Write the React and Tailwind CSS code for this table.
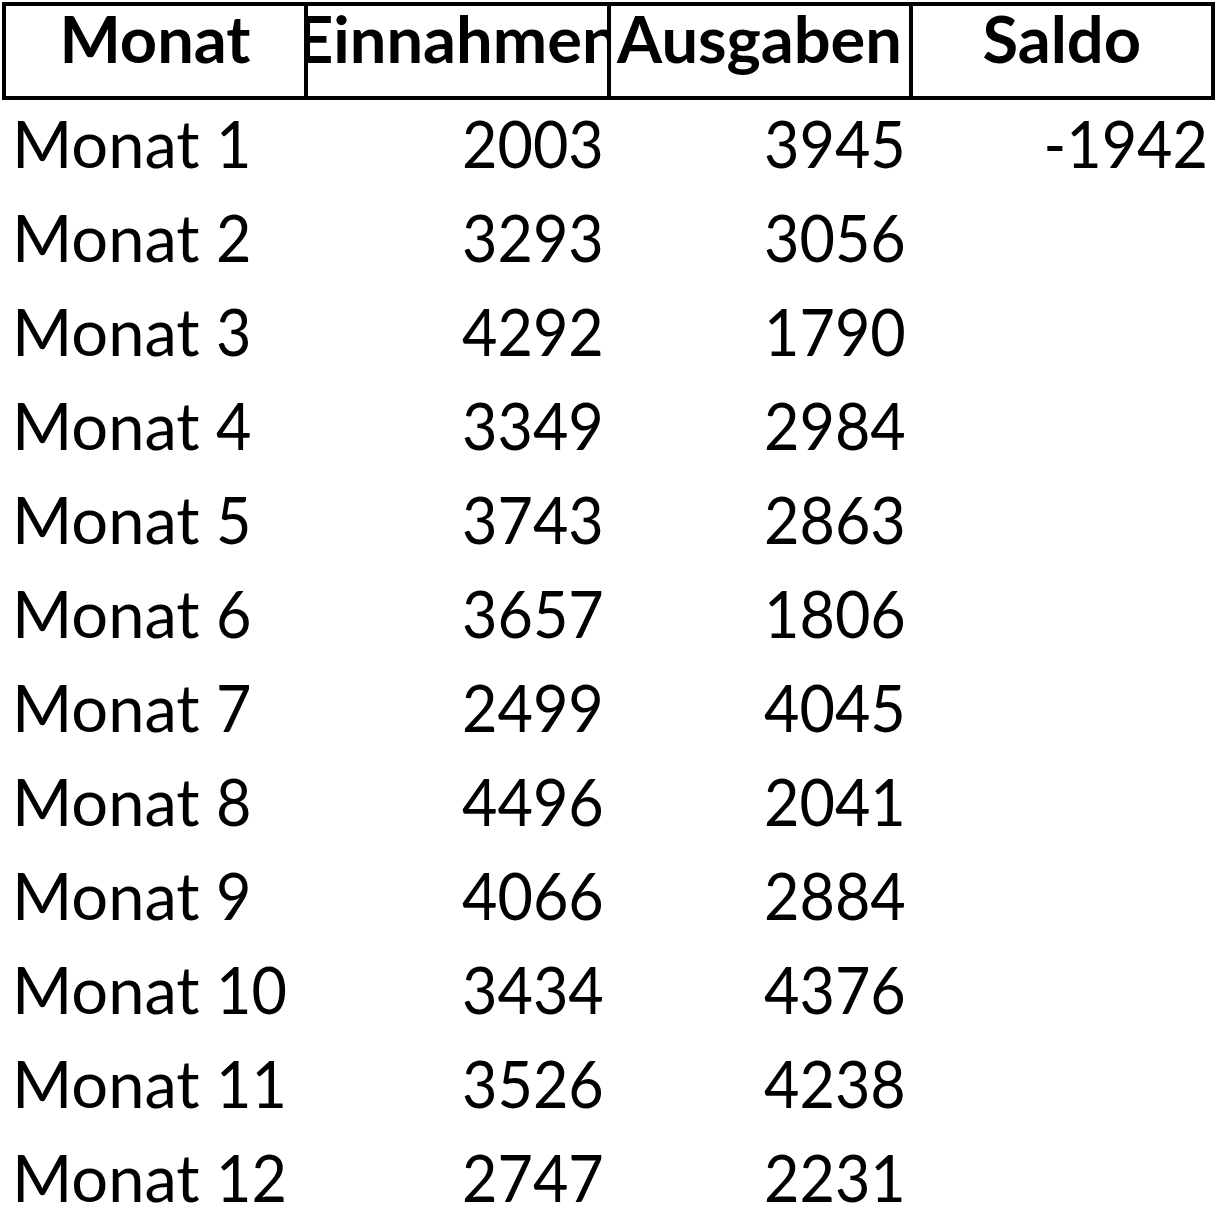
import React from "react";

const rows = [
  ["1", "2003", "3945", "-1942"],
  ["2", "3293", "3056", ""],
  ["3", "4292", "1790", ""],
  ["4", "3349", "2984", ""],
  ["5", "3743", "2863", ""],
  ["6", "3657", "1806", ""],
  ["7", "2499", "4045", ""],
  ["8", "4496", "2041", ""],
  ["9", "4066", "2884", ""],
  ["10", "3434", "4376", ""],
  ["11", "3526", "4238", ""],
  ["12", "2747", "2231", ""],
];

const headers = ["Monat", "Einnahmen", "Ausgaben", "Saldo"];

function Num({ v }) {
  return <span className="inline-block origin-right scale-x-[0.94]">{v}</span>;
}

export default function App() {
  return (
    <div
      className="bg-white text-black w-[1217px] h-[1207px] overflow-hidden"
      style={{ fontFamily: "Lato, 'Carlito', sans-serif" }}
    >
      <div className="ml-[2px] mt-[2px] w-[1213px]">
        <div className="grid grid-cols-[298px_302.5px_302px_302.5px] border-4 border-black h-[98px]">
          {headers.map((h, i) => (
            <div
              key={h}
              className={`flex justify-center overflow-hidden whitespace-nowrap ${i > 0 ? "border-l-4 border-black" : ""}`}
            >
              <span className="text-[65px] font-bold leading-[1.2] -mt-[7px] shrink-0">{h}</span>
            </div>
          ))}
        </div>
        {rows.map((r) => (
          <div
            key={r[0]}
            className="grid grid-cols-[304px_302.5px_302px_302.5px] h-[94px] text-[65px] leading-[1.2] whitespace-nowrap"
          >
            <div className="pl-[10px] pt-[4px]">
              Monat <span className="inline-block origin-left scale-x-[0.94]">{r[0]}</span>
            </div>
            <div className="text-right pr-[5px] pt-[4px]">
              <Num v={r[1]} />
            </div>
            <div className="text-right pr-[5px] pt-[4px]">
              <Num v={r[2]} />
            </div>
            <div className="text-right pr-[5px] pt-[4px]">{r[3] && <Num v={r[3]} />}</div>
          </div>
        ))}
      </div>
    </div>
  );
}
